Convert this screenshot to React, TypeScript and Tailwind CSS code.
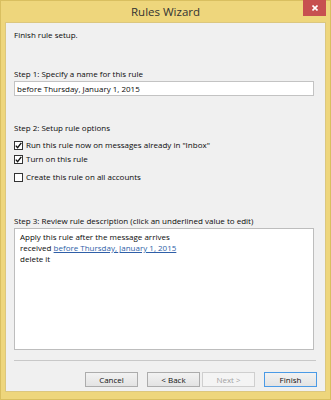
import React from "react";

const font = { fontFamily: '"Open Sans", "Noto Sans", sans-serif' };

function Check({ checked }: { checked?: boolean }) {
  return (
    <span className="flex h-[9px] w-[9px] shrink-0 items-center justify-center border border-[#333] bg-white">
      {checked && (
        <svg width="7" height="7" viewBox="0 0 7 7">
          <path d="M0.8 3.6 L2.6 5.6 L6.3 0.9" fill="none" stroke="#111" strokeWidth="1.4" />
        </svg>
      )}
    </span>
  );
}

function Option({ checked, label, className }: { checked?: boolean; label: string; className?: string }) {
  return (
    <div className={"flex h-[14px] items-center gap-[3px] " + (className ?? "")}>
      <Check checked={checked} />
      <span>{label}</span>
    </div>
  );
}

function Btn({ label, kind }: { label: string; kind?: "default" | "disabled" }) {
  const base = "flex h-[15px] w-[53px] items-center justify-center border text-[8px] bg-gradient-to-b from-[#f2f2f2] to-[#e3e3e3]";
  const look =
    kind === "default"
      ? "border-[#4a9ae6] text-[#111]"
      : kind === "disabled"
        ? "border-[#cfcfcf] from-[#f4f4f4] to-[#f4f4f4] text-[#a3a3a3]"
        : "border-[#acacac] text-[#111]";
  return <div className={base + " " + look}>{label}</div>;
}

export default function App() {
  return (
    <div style={font} className="flex h-[400px] w-[331px] flex-col border border-[#d9bf60] bg-[#eed67c] text-[#0a0a0a]">
      <div className="relative flex h-[21px] shrink-0 items-center justify-center">
        <span className="text-[11.5px] text-[#333]">Rules Wizard</span>
        <div className="absolute right-[4px] top-[-1px] flex h-[16px] w-[23px] items-center justify-center bg-[#c75050]">
          <svg width="6" height="6" viewBox="0 0 6 6">
            <path d="M0.5 0.5 L5.5 5.5 M5.5 0.5 L0.5 5.5" stroke="#fff" strokeWidth="1.6" />
          </svg>
        </div>
      </div>

      <div className="mx-[4px] mb-[7px] flex flex-1 flex-col border border-[#dcc77e] bg-[#f0f0f0] px-[8px] pt-[5px] text-[8px]">
        <div className="h-[14px] leading-[14px]">Finish rule setup.</div>

        <div className="mt-[25px] h-[14px] leading-[14px]">Step 1: Specify a name for this rule</div>
        <div className="flex h-[15px] w-[300px] items-center border border-[#c3c3c3] bg-white px-[2px]">
          before Thursday, January 1, 2015
        </div>

        <div className="mt-[25px] h-[14px] leading-[14px]">Step 2: Setup rule options</div>
        <Option className="mt-[3px]" checked label={'Run this rule now on messages already in "Inbox"'} />
        <Option checked label="Turn on this rule" />
        <Option className="mt-[4px]" label="Create this rule on all accounts" />

        <div className="mt-[30px] h-[14px] leading-[14px]">Step 3: Review rule description (click an underlined value to edit)</div>
        <div className="h-[122px] w-[300px] border border-[#bdbdbd] bg-white px-[5px] pt-[2px] leading-[11px]">
          <div>Apply this rule after the message arrives</div>
          <div>
            received <span className="text-[#2f5fa8] underline">before Thursday, January 1, 2015</span>
          </div>
          <div>delete it</div>
        </div>

        <div className="mt-[10px] h-[2px] w-[302px] border-t border-[#c8c8c8] border-b-white" />

        <div className="mt-[10px] flex w-[303px] justify-end">
          <Btn label="Cancel" />
          <div className="ml-[9px]">
            <Btn label="< Back" />
          </div>
          <div className="ml-[2px]">
            <Btn label="Next >" kind="disabled" />
          </div>
          <div className="ml-[9px]">
            <Btn label="Finish" kind="default" />
          </div>
        </div>
      </div>
    </div>
  );
}
